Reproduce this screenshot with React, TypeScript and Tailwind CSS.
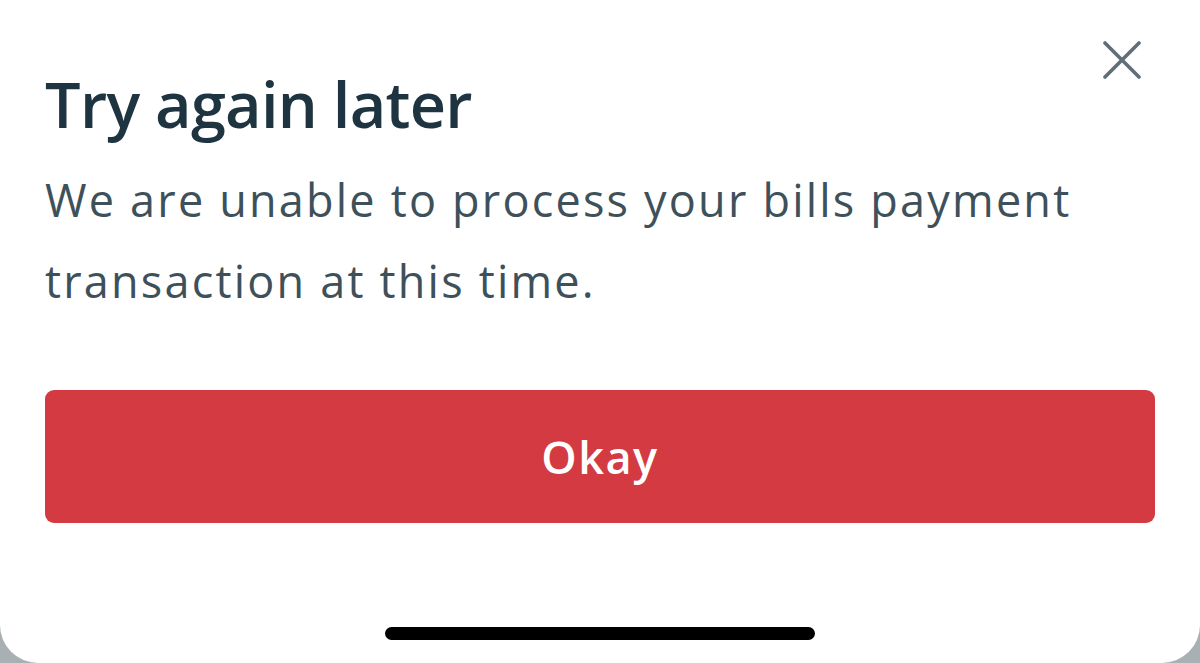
import React from "react";

const CloseIcon = () => (
  <svg width="38" height="38" viewBox="0 0 38 38" fill="none">
    <path
      d="M2 2L36 36M36 2L2 36"
      stroke="#5f6e77"
      strokeWidth="3.6"
      strokeLinecap="round"
    />
  </svg>
);

const App = () => {
  return (
    <div className="w-[1200px] h-[663px] bg-[#a9b0b4] overflow-hidden">
      <div
        className="relative w-full h-full bg-white rounded-b-[38px] flex flex-col px-[45px]"
        style={{ fontFamily: "'Open Sans', Lato, sans-serif" }}
      >
        <button className="absolute top-[41px] right-[59px]" aria-label="Close">
          <CloseIcon />
        </button>

        <h1 className="mt-[72px] text-[63px] leading-[63px] font-semibold tracking-[-0.7px] text-[#1f3441]">
          Try again later
        </h1>
        <p className="mt-[24px] text-[45px] leading-[81px] tracking-[2.2px] text-[#3e515b] w-[1100px]">
          We are unable to process your bills payment transaction at this time.
        </p>

        <button className="mt-[69px] h-[133px] w-full rounded-[9px] bg-[#d33a41] text-white text-[45px] font-semibold tracking-[1.5px] flex items-center justify-center">
          Okay
        </button>

        <div className="flex justify-center mt-[104px]">
          <div className="w-[430px] h-[13px] rounded-full bg-black" />
        </div>
      </div>
    </div>
  );
};

export default App;
